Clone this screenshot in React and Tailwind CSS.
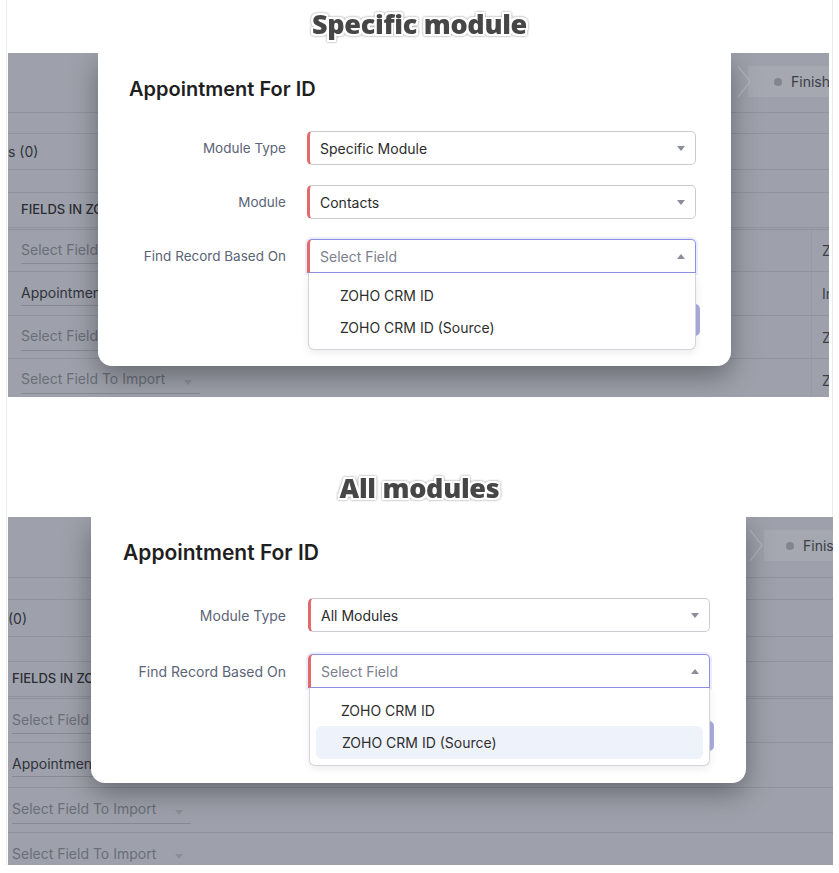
const ui = { fontFamily: 'Inter, "Open Sans", sans-serif' }

const Caret = ({ up }) =>
  up ? (
    <span className="inline-block h-0 w-0 border-x-[4.5px] border-b-[5px] border-x-transparent border-b-[#8b8e97]" />
  ) : (
    <span className="inline-block h-0 w-0 border-x-[4.5px] border-t-[5px] border-x-transparent border-t-[#8b8e97]" />
  )

const Heading = ({ children }) => (
  <h2
    className="text-center text-[27px] font-extrabold tracking-[-0.3px] text-[#464646] [text-shadow:2px_0_0_#fff,-2px_0_0_#fff,0_2px_0_#fff,0_-2px_0_#fff,2px_2px_0_#fff,-2px_-2px_0_#fff,2px_-2px_0_#fff,-2px_2px_0_#fff] drop-shadow-[0_0_1px_rgba(0,0,0,0.45)]"
    style={{ fontFamily: '"Open Sans", sans-serif' }}
  >
    {children}
  </h2>
)

// one select box in the modal
const Field = ({ label, value, placeholder, open, labelW, labelSize, boxW, gap, options, active }) => (
  <div className="flex items-center">
    <div className={`${labelW} ${labelSize} text-right text-[#5c6478]`}>{label}</div>
    <div className={`relative ${gap} ${boxW}`}>
      {open ? (
        <div className="flex h-[34px] items-center justify-between rounded-t-[5px] border border-l-[3px] border-[#8d90e4] border-l-[#e36a6c] pl-[10px] pr-[10px] shadow-[0_0_0_2px_rgba(130,135,235,0.15)]">
          <span className="text-[14px] text-[#7c808c]">{placeholder}</span>
          <Caret up />
        </div>
      ) : (
        <div className="flex h-[34px] items-center justify-between rounded-[5px] border border-l-[3px] border-[#c9ccd3] border-l-[#e36a6c] pl-[10px] pr-[10px]">
          <span className="text-[14px] text-[#2b2b2b]">{value}</span>
          <Caret />
        </div>
      )}
      {open && (
        <div className="absolute left-[1px] right-0 top-full z-20 rounded-b-[6px] border border-t-0 border-[#d3d5db] bg-white px-[6px] pb-[6px] pt-[6px] shadow-[0_3px_8px_rgba(0,0,0,0.08)]">
          {options.map((o) => (
            <div
              key={o}
              className={
                o === active
                  ? 'flex h-[33px] items-center rounded-[6px] bg-[#eef2fb] pl-[26px] text-[14px] text-[#2e2e2e]'
                  : 'flex h-[32px] items-center rounded-[6px] pl-[25px] text-[14px] text-[#2e2e2e]'
              }
            >
              {o}
            </div>
          ))}
        </div>
      )}
    </div>
  </div>
)

const RowText = ({ children, dark, arrow, pad }) => (
  <div className={`relative flex items-center ${pad}`}>
    <div className="flex w-[179px] items-center justify-between border-b border-[#868a94] pb-[2px]">
      <span className={dark ? 'text-[14px] text-[#30333b]' : 'text-[14px] text-[#6a6e79]'}>{children}</span>
      {arrow && <span className="mr-[8px]"><Caret /></span>}
    </div>
  </div>
)

// the wizard step strip at the top right of each background page
const Stepper = ({ bandL, stepL }) => (
  <div className="relative h-full">
    <div className={`absolute right-0 top-[13px] h-[31px] bg-[#a5a8b1] ${bandL}`} />
    <div className={`absolute top-[13px] flex h-[31px] items-center ${stepL}`}>
      <svg width="14" height="31" viewBox="0 0 14 31" className="-ml-[36px] mr-[22px]">
        <polyline points="0,0 12,15.5 0,31" fill="none" stroke="#b3b6be" strokeWidth="1.2" />
      </svg>
      <span className="h-[8px] w-[8px] rounded-full bg-[#82858f]" />
      <span className="ml-[9px] whitespace-nowrap text-[14px] text-[#3b3e47]">Finish</span>
    </div>
  </div>
)

export default function App() {
  return (
    <div className="min-h-screen bg-white" style={ui}>
      <div className="ml-[6px] w-[827px] border-x border-[#ececec]">
        {/* specific module */}
        <div className="flex h-[53px] items-start justify-center pt-[4px]">
          <Heading>Specific module</Heading>
        </div>
        <div className="relative ml-[1px] h-[344px] w-[821px] overflow-hidden bg-[#9ea1ab]">
          <div className="flex flex-col">
            <div className="h-[60px] border-b border-[#8f939d]">
              <Stepper bandL="left-[740px]" stepL="left-[766px]" />
            </div>
            <div className="h-[21px] border-b border-[#8f939d]" />
            <div className="flex h-[36px] items-center border-b border-[#8f939d] text-[14px] text-[#30333b]">s (0)</div>
            <div className="h-[23px] border-b border-[#8f939d]" />
            <div className="flex h-[37px] items-center border-b-[3px] border-double border-[#8f939d] pl-[13px] text-[13px] font-medium text-[#2b2d33]">
              FIELDS IN ZOHO CRM
            </div>
            {[
              ['Select Field To Import', false, 'Zoho', 'h-[42px]'],
              ['Appointment For ID', true, 'Import', 'h-[44px]'],
              ['Select Field To Import', false, 'Zoho', 'h-[43px]'],
              ['Select Field To Import', false, 'Zoho', 'h-[43px]'],
            ].map(([t, dark, r, h], i) => (
              <div key={i} className={`flex ${h} border-b border-[#8f939d]`}>
                <div className="flex w-[803px] shrink-0 items-center">
                  <RowText dark={dark} arrow={!dark} pad="pl-[13px]">{t}</RowText>
                </div>
                <div className="flex flex-1 items-center whitespace-nowrap border-l border-[#969aa3] pl-[10px] text-[14px] text-[#3b3e47]">{r}</div>
              </div>
            ))}
          </div>

          <div className="absolute left-[90px] top-0 z-10 h-[313px] w-[633px] rounded-b-[14px] bg-white pt-[24px] shadow-[0_10px_28px_rgba(0,0,0,0.35)]">
            <div className="pl-[31px] text-[20px] font-semibold leading-[24px] text-[#1f1f1f]">Appointment For ID</div>
            <div className="mt-[30px] flex flex-col gap-[20px]">
              <Field label="Module Type" value="Specific Module" labelW="w-[188px]" labelSize="text-[13.5px]" boxW="w-[389px]" gap="ml-[21px]" />
              <Field label="Module" value="Contacts" labelW="w-[188px]" labelSize="text-[13.5px]" boxW="w-[389px]" gap="ml-[21px]" />
              <Field
                label="Find Record Based On"
                placeholder="Select Field"
                open
                labelW="w-[188px]"
                labelSize="text-[13.5px]"
                boxW="w-[389px]"
                gap="ml-[21px]"
                options={['ZOHO CRM ID', 'ZOHO CRM ID (Source)']}
              />
            </div>
            <div className="mt-[31px] pl-[500px]">
              <button className="h-[32px] w-[102px] rounded-[5px] bg-[#a9acdc] text-[14px] text-white">Next</button>
            </div>
          </div>
        </div>

        {/* all modules */}
        <div className="flex h-[120px] items-end justify-center pb-[9px]">
          <Heading>All modules</Heading>
        </div>
        <div className="relative ml-[1px] h-[348px] w-[825px] overflow-hidden bg-[#9ea1ab]">
          <div className="flex flex-col">
            <div className="h-[61px] border-b border-[#8f939d]">
              <Stepper bandL="left-[756px]" stepL="left-[778px]" />
            </div>
            <div className="h-[22px] border-b border-[#8f939d]" />
            <div className="flex h-[37px] items-center border-b border-[#8f939d] text-[14px] text-[#30333b]">(0)</div>
            <div className="h-[25px] border-b border-[#8f939d]" />
            <div className="flex h-[37px] items-center border-b-[3px] border-double border-[#8f939d] pl-[4px] text-[13px] font-medium text-[#2b2d33]">
              FIELDS IN ZOHO CRM
            </div>
            {[
              ['Select Field To Import', false, 'h-[44px]'],
              ['Appointment For ID', true, 'h-[45px]'],
              ['Select Field To Import', false, 'h-[45px]'],
              ['Select Field To Import', false, 'h-[44px]'],
            ].map(([t, dark, h], i) => (
              <div key={i} className={`flex ${h} items-center border-b border-[#8f939d]`}>
                <RowText dark={dark} arrow={!dark} pad="pl-[4px]">{t}</RowText>
              </div>
            ))}
          </div>

          <div className="absolute left-[83px] top-0 z-10 h-[266px] w-[655px] rounded-b-[14px] bg-white pt-[24px] shadow-[0_10px_28px_rgba(0,0,0,0.35)]">
            <div className="pl-[32px] text-[21px] font-semibold leading-[24px] text-[#1f1f1f]">Appointment For ID</div>
            <div className="mt-[33px] flex flex-col gap-[22px]">
              <Field label="Module Type" value="All Modules" labelW="w-[195px]" labelSize="text-[14px]" boxW="w-[402px]" gap="ml-[22px]" />
              <Field
                label="Find Record Based On"
                placeholder="Select Field"
                open
                labelW="w-[195px]"
                labelSize="text-[14px]"
                boxW="w-[402px]"
                gap="ml-[22px]"
                options={['ZOHO CRM ID', 'ZOHO CRM ID (Source)']}
                active="ZOHO CRM ID (Source)"
              />
            </div>
            <div className="mt-[33px] pl-[521px]">
              <button className="h-[30px] w-[102px] rounded-[5px] bg-[#a9acdc] text-[14px] text-white">Next</button>
            </div>
          </div>
        </div>
      </div>
    </div>
  )
}
